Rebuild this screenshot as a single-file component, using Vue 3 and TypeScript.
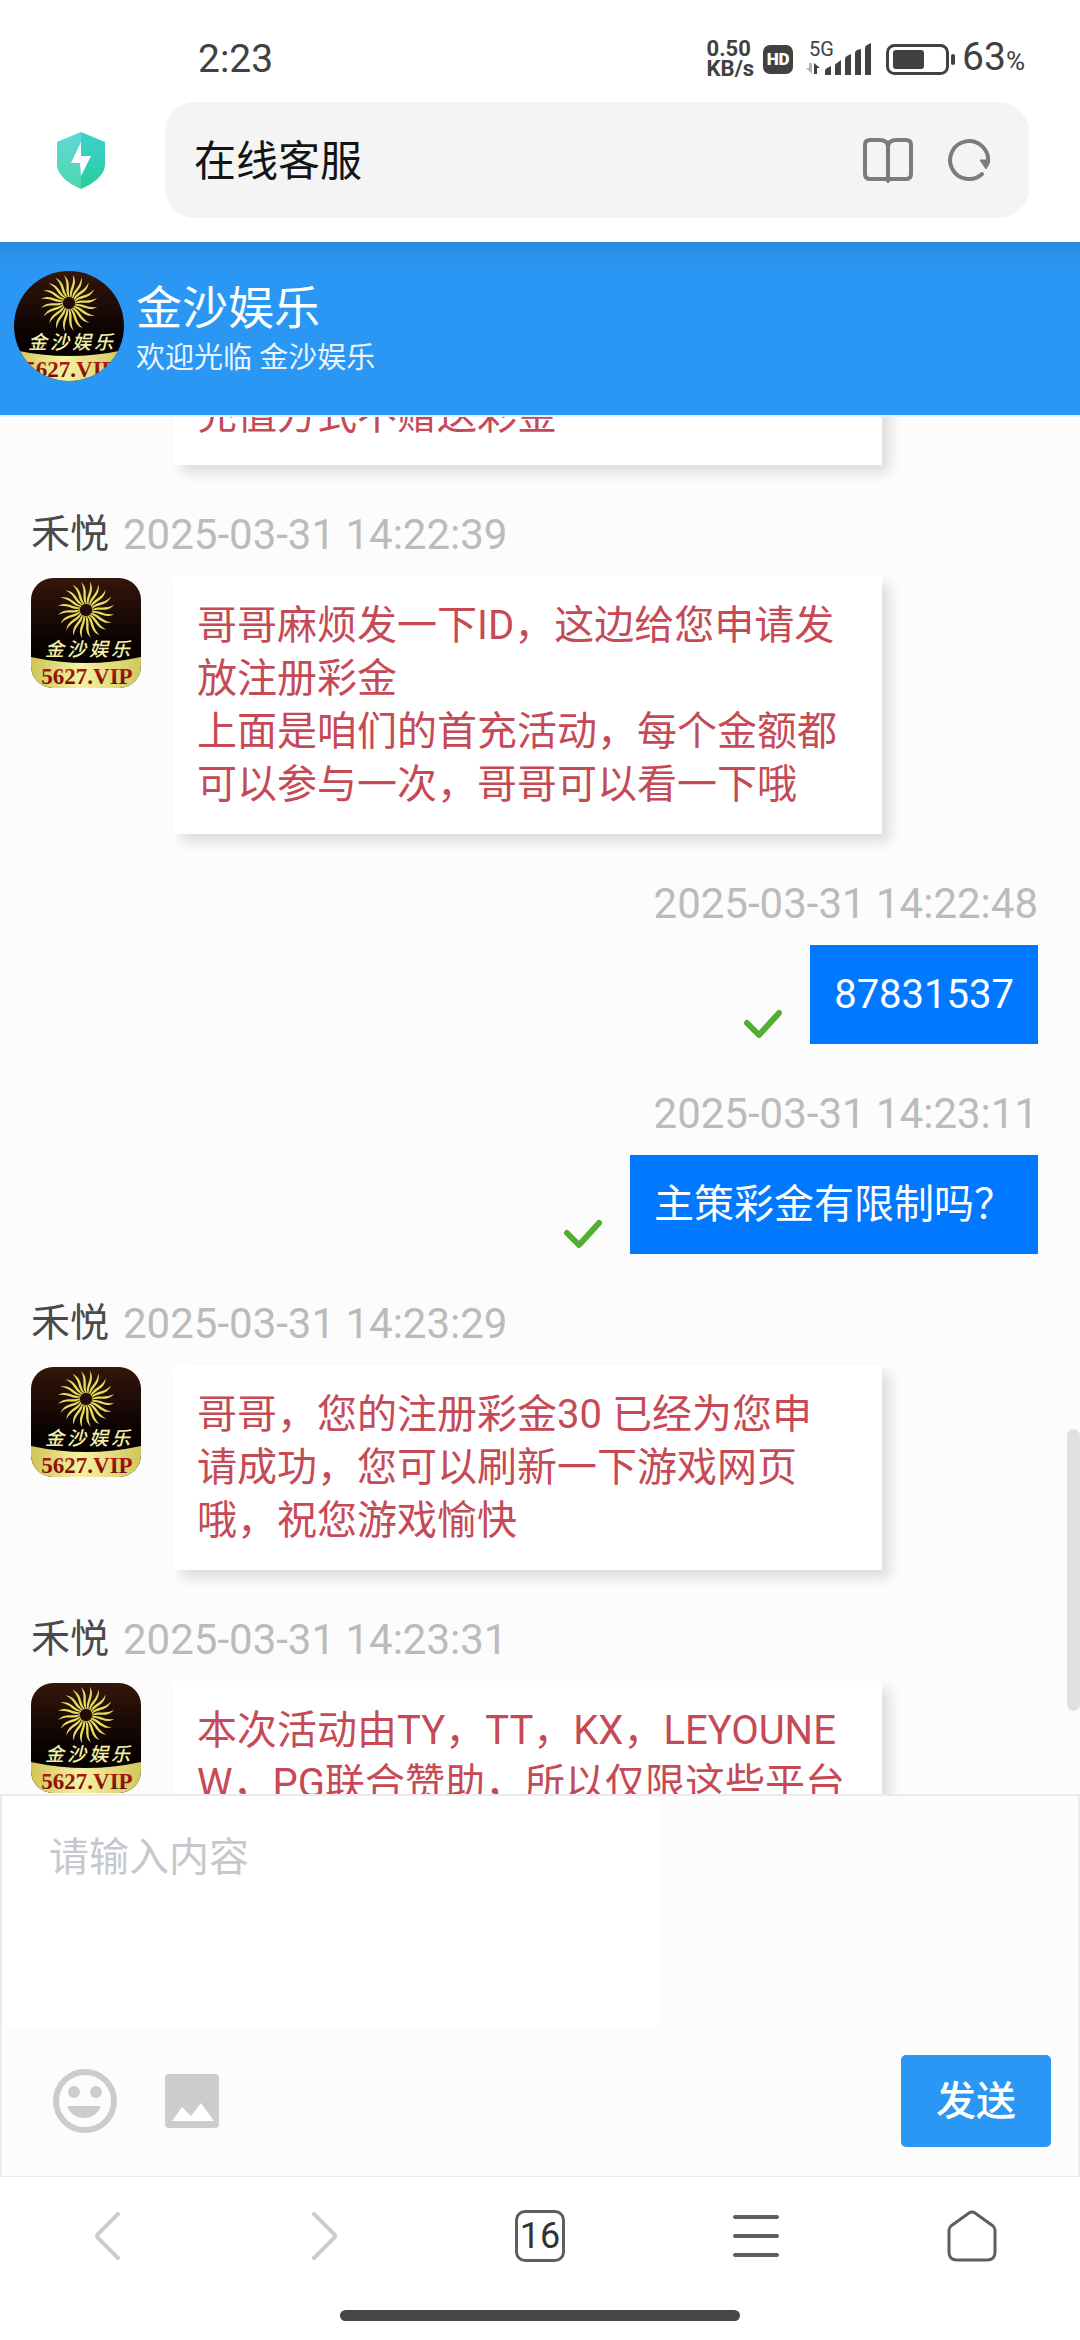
<script setup lang="ts">
import { onMounted, ref } from 'vue'

interface Message {
  id: number
  from: 'agent' | 'visitor'
  name?: string
  time?: string
  text: string
}

const messages: Message[] = [
  { id: 1, from: 'agent', text: '充值方式不赠送彩金' },
  {
    id: 2,
    from: 'agent',
    name: '禾悦',
    time: '2025-03-31 14:22:39',
    text: '哥哥麻烦发一下ID，这边给您申请发放注册彩金\n上面是咱们的首充活动，每个金额都可以参与一次，哥哥可以看一下哦',
  },
  { id: 3, from: 'visitor', time: '2025-03-31 14:22:48', text: '87831537' },
  { id: 4, from: 'visitor', time: '2025-03-31 14:23:11', text: '主策彩金有限制吗？' },
  {
    id: 5,
    from: 'agent',
    name: '禾悦',
    time: '2025-03-31 14:23:29',
    text: '哥哥，您的注册彩金30 已经为您申请成功，您可以刷新一下游戏网页哦，祝您游戏愉快',
  },
  {
    id: 6,
    from: 'agent',
    name: '禾悦',
    time: '2025-03-31 14:23:31',
    text: '本次活动由TY，TT，KX，LEYOUNEW，PG联合赞助，所以仅限这些平台',
  },
]

const rayCount = 20
const rays = Array.from({ length: rayCount }, (_, i) => (i * 360) / rayCount)

const draft = ref('')
const chat = ref<HTMLElement | null>(null)

onMounted(() => {
  if (chat.value) chat.value.scrollTop = 51
})
</script>

<template>
  <div class="screen">
    <svg class="defs" width="0" height="0" aria-hidden="true">
      <defs>
        <linearGradient id="logo-night" x1="0" y1="0" x2="0" y2="1">
          <stop offset="0" stop-color="#34160b" />
          <stop offset="0.6" stop-color="#080201" />
          <stop offset="1" stop-color="#000" />
        </linearGradient>
        <linearGradient id="logo-gold" x1="0" y1="0" x2="1" y2="0">
          <stop offset="0" stop-color="#cfc455" />
          <stop offset="0.45" stop-color="#f6f2a4" />
          <stop offset="1" stop-color="#d2c75c" />
        </linearGradient>
        <linearGradient id="logo-red" x1="0" y1="0" x2="0" y2="1">
          <stop offset="0" stop-color="#c81a12" />
          <stop offset="1" stop-color="#5a0d05" />
        </linearGradient>
        <symbol id="logo" viewBox="0 0 110 110">
          <rect width="110" height="110" fill="url(#logo-night)" />
          <g fill="#e6db5c">
            <path
              v-for="angle in rays"
              :key="angle"
              :transform="`translate(55 32) rotate(${angle})`"
              d="M-0.500 -6C-5 -13 0 -18 -5 -28C3 -21 -2 -14 0.800 -6Z"
            />
          </g>
          <text x="14 36 58 80" y="78" font-size="19" font-weight="500" font-style="italic" fill="#f4f0a8">金沙娱乐</text>
          <path d="M0 79Q55 91 110 79V110H0Z" fill="url(#logo-gold)" />
          <text class="logo-site" x="56" y="106" font-size="23" text-anchor="middle" fill="url(#logo-red)">5627.VIP</text>
        </symbol>
      </defs>
    </svg>

    <div class="status">
      <span class="clock">2:23</span>
      <div class="indicators">
        <span class="rate"><span>0.50</span><span>KB/s</span></span>
        <span class="hd">HD</span>
        <span class="network">
          <span class="generation">5G</span>
          <svg width="68" height="32" viewBox="0 0 68 32" aria-hidden="true">
            <path d="M4 20H7V31L1 25H4Z" fill="#b4b4b4" />
            <path d="M9 20L15 25H12V31H9Z" fill="#414141" />
            <g fill="#414141">
              <path d="M20 28Q20 26 22 25L26 23V32H20Z" />
              <path d="M30 22Q30 21 32 20L36 17V32H30Z" />
              <path d="M40 16Q40 14 42 13L46 11V32H40Z" />
              <path d="M50 10Q50 8 52 7L56 6V32H50Z" />
              <path d="M60 5Q60 3 62 2L66 0V32H60Z" />
            </g>
          </svg>
        </span>
        <svg class="battery" width="70" height="31" viewBox="0 0 70 31" aria-hidden="true">
          <rect x="1.500" y="1.500" width="60" height="28" rx="7" fill="none" stroke="#414141" stroke-width="3" />
          <rect x="7" y="6" width="31" height="19" rx="3" fill="#414141" />
          <rect x="65" y="10" width="4" height="11" rx="2" fill="#414141" />
        </svg>
        <span class="level">63<small>%</small></span>
      </div>
    </div>

    <div class="address">
      <svg class="shield" width="50" height="58" viewBox="0 0 50 58" aria-hidden="true">
        <defs>
          <linearGradient id="shield-fill" x1="0" y1="0" x2="0" y2="1">
            <stop offset="0" stop-color="#3fcfcf" />
            <stop offset="1" stop-color="#25cf9b" />
          </linearGradient>
        </defs>
        <path d="M25 1L49 11V33C49 45 36 53 25 58C14 53 1 45 1 33V11Z" fill="url(#shield-fill)" />
        <path d="M25 1L1 11V33C1 45 14 53 25 58Z" fill="#fff" opacity="0.180" />
        <path d="M25 11L15 32H24L25 45L35 25H25Z" fill="#fff" />
      </svg>
      <div class="location">
        <span class="page-title">在线客服</span>
        <button type="button" class="bare" aria-label="阅读">
          <svg width="52" height="48" viewBox="0 0 52 48" fill="none" stroke="#7c7c7c" stroke-width="4">
            <path d="M26 11Q26 4 17 4H8Q3 4 3 9V38Q3 43 8 43H44Q49 43 49 38V9Q49 4 44 4H35Q26 4 26 11V43" />
            <path d="M23 44H29L26 47Z" fill="#7c7c7c" stroke-width="1" />
          </svg>
        </button>
        <button type="button" class="bare" aria-label="刷新">
          <svg width="44" height="48" viewBox="0 0 44 48" fill="none" stroke="#7c7c7c" stroke-width="4">
            <path d="M35 38A19 19 0 1 1 41 26" stroke-linecap="round" />
            <path d="M33 24H42V28L39 33Z" fill="#7c7c7c" stroke-width="1" stroke-linejoin="round" />
          </svg>
        </button>
      </div>
    </div>

    <header class="brand">
      <svg class="brand-logo" viewBox="0 0 110 110" role="img"><use href="#logo" /></svg>
      <div class="brand-text">
        <h1>金沙娱乐</h1>
        <p>欢迎光临 金沙娱乐</p>
      </div>
    </header>

    <main class="chat">
      <div ref="chat" class="chat-scroll">
        <article v-for="message in messages" :key="message.id" class="message" :class="message.from">
          <div v-if="message.time" class="meta">
            <span v-if="message.name" class="name">{{ message.name }}</span>
            <time>{{ message.time }}</time>
          </div>
          <div class="row">
            <template v-if="message.from === 'agent'">
              <svg v-if="message.name" class="avatar" viewBox="0 0 110 110" role="img"><use href="#logo" /></svg>
              <span v-else class="avatar-space"></span>
            </template>
            <svg v-else class="check" width="40" height="30" viewBox="0 0 40 30" aria-hidden="true">
              <path d="M4 14L16 26L36 4" fill="none" stroke="#53ae31" stroke-width="6" stroke-linecap="round" stroke-linejoin="round" />
            </svg>
            <p class="bubble">{{ message.text }}</p>
          </div>
        </article>
      </div>
      <span class="thumb"></span>
    </main>

    <form class="composer" @submit.prevent>
      <textarea v-model="draft" placeholder="请输入内容" aria-label="请输入内容"></textarea>
      <div class="tools">
        <button type="button" class="bare" aria-label="表情">
          <svg width="64" height="64" viewBox="0 0 64 64" fill="#ccc">
            <circle cx="32" cy="32" r="29" fill="none" stroke="#ccc" stroke-width="6" />
            <circle cx="21" cy="23" r="6" />
            <circle cx="43" cy="23" r="6" />
            <path d="M14 37H48C45 45 38 49 31 49S17 45 14 37Z" />
          </svg>
        </button>
        <button type="button" class="bare" aria-label="图片">
          <svg width="54" height="54" viewBox="0 0 54 54">
            <rect width="54" height="54" rx="4" fill="#ccc" />
            <path d="M7 47L17 33L26 42L36 29L49 47Z" fill="#fff" />
          </svg>
        </button>
        <button type="submit" class="send">发送</button>
      </div>
    </form>

    <nav class="browser-nav">
      <button type="button" class="bare" aria-label="后退">
        <svg width="28" height="52" viewBox="0 0 28 52" fill="none" stroke="#ccc" stroke-width="4" stroke-linecap="round">
          <path d="M24 4L4 24Q2 26 4 28L24 48" />
        </svg>
      </button>
      <button type="button" class="bare" aria-label="前进">
        <svg width="28" height="52" viewBox="0 0 28 52" fill="none" stroke="#ccc" stroke-width="4" stroke-linecap="round">
          <path d="M4 4L24 24Q26 26 24 28L4 48" />
        </svg>
      </button>
      <button type="button" class="bare"><span class="tabs">16</span></button>
      <button type="button" class="bare" aria-label="菜单">
        <svg width="46" height="52" viewBox="0 0 46 52" stroke="#5e5e5e" stroke-width="4" stroke-linecap="round">
          <path d="M2 7H44M2 26H44M2 45H44" />
        </svg>
      </button>
      <button type="button" class="bare" aria-label="主页">
        <svg width="50" height="52" viewBox="0 0 50 52" fill="none" stroke="#5e5e5e" stroke-width="3">
          <path d="M22 3Q25 1 28 3L46 16Q48 18 48 20V42Q48 50 40 50H10Q2 50 2 42V20Q2 18 4 16Z" />
        </svg>
      </button>
    </nav>
    <div class="gesture"><span></span></div>
  </div>
</template>

<style>
body {
  margin: 0;
  background: #fff;
}
</style>

<style scoped>
.screen {
  display: flex;
  flex-direction: column;
  height: 100vh;
  background: #fff;
  color: #414141;
  font-family: Roboto, 'Noto Sans CJK SC', sans-serif;
  font-size: 40px;
}

.defs {
  position: absolute;
}

.logo-site {
  font-family: 'Liberation Serif', serif;
  font-weight: 700;
}

.bare {
  display: flex;
  align-items: center;
  justify-content: center;
  padding: 0;
  border: 0;
  background: none;
  color: inherit;
  font: inherit;
}

.status {
  display: flex;
  align-items: center;
  justify-content: space-between;
  height: 86px;
  padding: 16px 55px 0 198px;
}

.clock,
.level {
  font-size: 39px;
  line-height: 48px;
}

.indicators {
  display: flex;
  align-items: center;
}

.rate {
  display: flex;
  flex-direction: column;
  margin-right: 9px;
  font-size: 22px;
  font-weight: 700;
  line-height: 20px;
}

.hd {
  display: flex;
  align-items: center;
  justify-content: center;
  width: 30px;
  height: 29px;
  margin-right: 12px;
  border-radius: 7px;
  background: #414141;
  color: #fff;
  font-size: 17px;
  font-weight: 900;
}

.network {
  position: relative;
  display: flex;
  margin-right: 13px;
}

.generation {
  position: absolute;
  top: -4px;
  left: 4px;
  font-size: 20px;
  line-height: 20px;
}

.battery {
  margin-right: 6px;
}

.level small {
  font-size: 26px;
}

.address {
  display: flex;
  align-items: center;
  padding: 0 51px 24px 56px;
}

.shield {
  flex: none;
  margin-right: 59px;
}

.location {
  display: flex;
  flex: 1;
  align-items: center;
  gap: 33px;
  height: 116px;
  padding: 0 38px 0 29px;
  border-radius: 30px;
  background: #f4f4f4;
}

.page-title {
  flex: 1;
  padding-bottom: 6px;
  color: #141414;
  font-size: 42px;
}

.brand {
  display: flex;
  align-items: center;
  gap: 12px;
  height: 173px;
  padding: 0 14px;
  border-bottom: 2px solid #e2f0fd;
  background: linear-gradient(#288cde, #2a97f4 24px);
  color: #fff;
}

.brand-logo,
.avatar {
  flex: none;
  width: 110px;
  height: 110px;
}

.brand-logo {
  margin-bottom: 6px;
  border-radius: 50%;
}

.brand-text h1,
.brand-text p {
  margin: 0;
  font-weight: 400;
}

.brand-text h1 {
  font-size: 46px;
  line-height: 58px;
}

.brand-text p {
  font-size: 29px;
  line-height: 42px;
  opacity: 0.9;
}

.chat {
  position: relative;
  flex: 1;
  min-height: 0;
  background: #fcfcfc;
}

.chat-scroll {
  display: flex;
  flex-direction: column;
  gap: 43px;
  box-sizing: border-box;
  height: 100%;
  padding: 0 42px 43px 31px;
  overflow-y: auto;
  scrollbar-width: none;
}

.thumb {
  position: absolute;
  top: 73.5%;
  right: 0;
  width: 13px;
  height: 20.5%;
  border-radius: 7px;
  background: #e1e1e1;
}

.message {
  display: flex;
  flex-direction: column;
  gap: 15px;
}

.meta {
  display: flex;
  gap: 14px;
  line-height: 53px;
}

.name {
  color: #4a4a4a;
  font-size: 39px;
}

.meta time {
  color: #bbb;
  font-size: 42px;
}

.row {
  display: flex;
  align-items: flex-start;
}

.avatar {
  margin-top: 2px;
  border-radius: 22px;
}

.avatar-space {
  flex: none;
  width: 110px;
}

.bubble {
  margin: 0;
  line-height: 53px;
  word-break: break-all;
  white-space: pre-line;
}

.agent .bubble {
  width: 651px;
  margin-left: 32px;
  padding: 23px 34px 23px 24px;
  background: #fff;
  box-shadow: 8px 8px 12px rgba(0, 0, 0, 0.12);
  color: #c64a56;
}

.visitor .meta {
  justify-content: flex-end;
}

.visitor .row {
  align-items: flex-end;
  justify-content: flex-end;
}

.visitor .bubble {
  padding: 23px 24px;
  background: #0078ff;
  color: #fff;
}

.check {
  margin: 0 27px 5px 0;
}

.composer {
  display: flex;
  flex-direction: column;
  border: 2px solid #ebebeb;
  border-bottom-width: 1px;
  background: #fcfcfc;
}

.composer textarea {
  box-sizing: border-box;
  width: 61%;
  height: 230px;
  padding: 35px 47px;
  border: 0;
  outline: 0;
  background: #fff;
  color: #414141;
  font: inherit;
  line-height: 53px;
  resize: none;
}

.composer textarea::placeholder {
  color: #c6c8cb;
}

.tools {
  display: flex;
  align-items: center;
  gap: 48px;
  height: 150px;
  padding: 0 27px 0 51px;
}

.send {
  width: 150px;
  height: 92px;
  margin-left: auto;
  padding: 0 0 6px;
  border: 0;
  border-radius: 5px;
  background: #2a97f4;
  color: #fff;
  font: inherit;
  font-weight: 500;
}

.browser-nav {
  display: grid;
  grid-template-columns: repeat(5, 1fr);
  height: 118px;
}

.tabs {
  display: flex;
  align-items: center;
  justify-content: center;
  box-sizing: border-box;
  width: 50px;
  height: 52px;
  border: 3px solid #5e5e5e;
  border-radius: 10px;
  color: #333;
  font-size: 36px;
}

.gesture {
  display: flex;
  justify-content: center;
  padding: 15px 0 19px;
}

.gesture span {
  width: 37%;
  height: 11px;
  border-radius: 6px;
  background: #474747;
}
</style>
